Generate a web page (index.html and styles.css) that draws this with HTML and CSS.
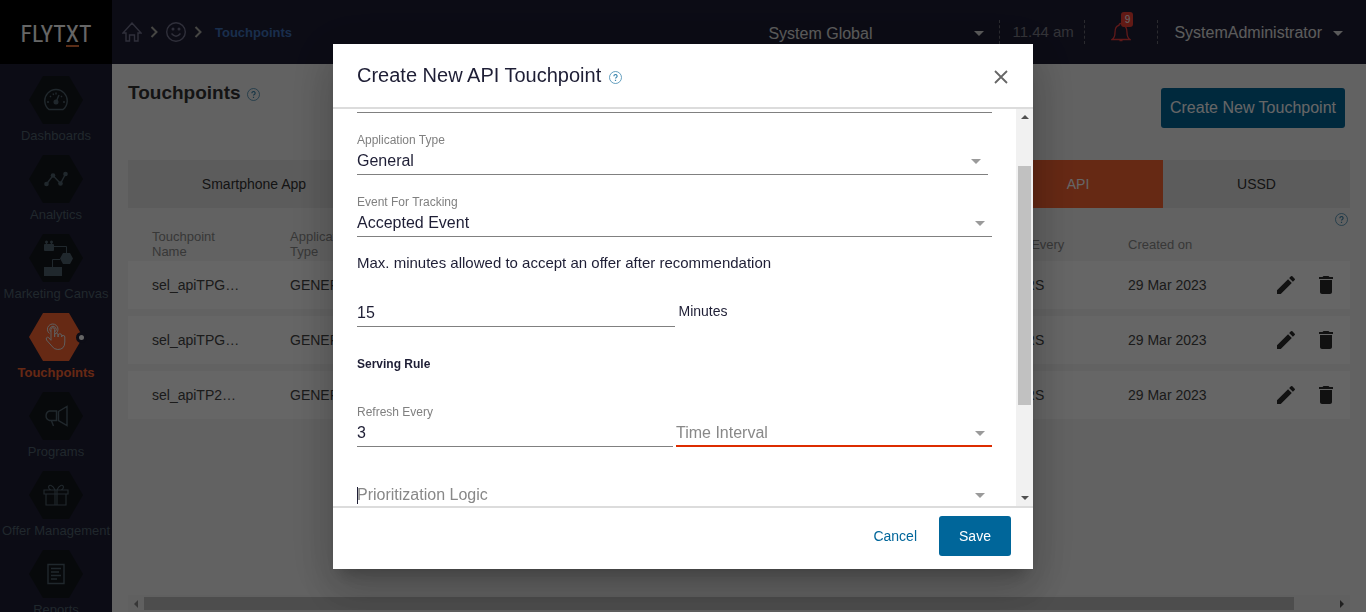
FILE: index.html
```html
<!DOCTYPE html>
<html lang="en">
<head>
<meta charset="utf-8">
<title>Touchpoints</title>
<link rel="stylesheet" href="styles.css">
</head>
<body>
<svg width="0" height="0" class="defs" aria-hidden="true">
  <symbol id="help" viewBox="0 0 13 13"><circle cx="6.500" cy="6.500" r="6" fill="none" stroke="currentColor" stroke-width=".8"/><path d="M4.900 5.200a1.600 1.600 0 1 1 2.400 1.300q-.8.500-.8 1.100M6.500 8.700v1.200" fill="none" stroke="currentColor" stroke-width="1.200"/></symbol>
  <symbol id="hexagon" viewBox="0 0 54 48"><path d="M14 0H40L54 24 40 48H14L0 24Z" fill="currentColor"/></symbol>
  <symbol id="pencil" viewBox="0 0 24 24"><path d="M3 17.250V21h3.750L17.810 9.940l-3.750-3.750L3 17.250zM20.710 7.040a1 1 0 0 0 0-1.410l-2.340-2.340a1 1 0 0 0-1.410 0l-1.830 1.830 3.750 3.750 1.830-1.830z" fill="currentColor"/></symbol>
  <symbol id="trash" viewBox="0 0 24 24"><path d="M6 19c0 1.100.9 2 2 2h8c1.100 0 2-.9 2-2V7H6v12zM19 4h-3.500l-1-1h-5l-1 1H5v2h14V4z" fill="currentColor"/></symbol>
</svg>

<div class="app">
  <aside class="sidebar">
    <a class="logo" href="#" aria-label="Flytxt">FLYT<span class="logo-x">X</span>T</a>
    <nav class="menu">
      <a class="menu-item" href="#">
        <span class="hex"><svg class="hex-bg"><use href="#hexagon"/></svg>
          <svg class="hex-icon" viewBox="0 0 24 24"><path d="M5 21.500A11.200 11.200 0 1 1 19 21.500Z"/><circle cx="12" cy="14" r="1.800" fill="currentColor"/><path d="M12 14l3-7M3 14h2M19 14h2M6 8l1 1M9 5.500l.7 1.500M18 8l-1 1M12 4.500v2"/></svg></span>
        Dashboards</a>
      <a class="menu-item" href="#">
        <span class="hex"><svg class="hex-bg"><use href="#hexagon"/></svg>
          <svg class="hex-icon" viewBox="0 0 24 24"><path d="M2.500 17L9 8.500 16.500 16.500 21.500 7"/><g fill="currentColor" stroke="none"><circle cx="2.500" cy="17" r="2.300"/><circle cx="9" cy="8.500" r="2.300"/><circle cx="16.500" cy="16.500" r="2.300"/><circle cx="21.500" cy="7" r="2.300"/></g></svg></span>
        Analytics</a>
      <a class="menu-item" href="#">
        <span class="hex"><svg class="hex-bg"><use href="#hexagon"/></svg>
          <svg class="hex-icon hex-icon-large" viewBox="-5 0 36 36"><path d="M11 6.500H23.500V14M9.500 27V19.500H17" stroke-width="1"/><g fill="currentColor" stroke="none"><rect x="1" y="4" width="10" height="7" rx="1"/><circle cx="3.500" cy="2" r="1.500"/><circle cx="8.500" cy="2" r="1.500"/><path d="M3 2h1v3H3zM8 2h1v3H8zM20 13h7l3 5.500-3 5.500h-7l-3-5.500zM1 27h18v9H1z"/></g></svg></span>
        Marketing Canvas</a>
      <a class="menu-item menu-item-active" href="#" aria-current="page">
        <span class="hex"><svg class="hex-bg"><use href="#hexagon"/></svg>
          <svg class="hex-icon hex-icon-touch" viewBox="0 0 22 28"><path d="M6 17V6.500a1.800 1.800 0 0 1 3.600 0V14v-2a1.700 1.700 0 0 1 3.500 0v2-1.500a1.700 1.700 0 0 1 3.500 0V14a1.600 1.600 0 0 1 3.200 0v5q0 7.500-7 7.500-4 0-6-3.500L1.500 17q-1-2.500 1-2.800 1.500 0 3.500 3.300M4.500 10.500a5.300 5.300 0 1 1 7-.5M5.500 8.500a3.200 3.200 0 1 1 5 0"/></svg>
          <span class="hex-dot"></span></span>
        Touchpoints</a>
      <a class="menu-item" href="#">
        <span class="hex"><svg class="hex-bg"><use href="#hexagon"/></svg>
          <svg class="hex-icon hex-icon-wide" viewBox="0 0 26 22"><path d="M13.500 6H6.500a5 5 0 0 0 0 9.500h7zM15.500 6.500l8.500-5v19l-8.500-5zM8.500 16l2 5"/></svg></span>
        Programs</a>
      <a class="menu-item" href="#">
        <span class="hex"><svg class="hex-bg"><use href="#hexagon"/></svg>
          <svg class="hex-icon hex-icon-wide" viewBox="0 0 26 22"><path d="M1 6h24v4H1zM3 10h20v11H3zM12 6v15M14 6v15M12 6C10 1 6 0 5.500 3q0 2 2.500 3M14 6c2-5 6-6 6.500-3q0 2-2.500 3" stroke-width="1.100"/></svg></span>
        Offer Management</a>
      <a class="menu-item" href="#">
        <span class="hex"><svg class="hex-bg"><use href="#hexagon"/></svg>
          <svg class="hex-icon" viewBox="0 0 24 24"><path d="M4 2.500h16v19H4zM7 6.500h10M7 10h8M7 13.500h10M7 17h6"/></svg></span>
        Reports</a>
    </nav>
  </aside>

  <div class="page">
    <header class="topbar">
      <nav class="crumbs" aria-label="Breadcrumb">
        <a href="#" aria-label="Home"><svg width="20" height="20" viewBox="0 0 20 20"><path d="M1 11L10 1l9 10h-3v8h-3.500v-6h-5v6H4v-8z"/></svg></a>
        <svg class="crumb-arrow" width="8" height="12" viewBox="0 0 8 12"><path d="M1.500 1l5 5-5 5"/></svg>
        <a href="#" aria-label="Workspace"><svg width="20" height="20" viewBox="0 0 20 20"><circle cx="10" cy="10" r="9.300"/><path d="M5.500 11.500q4.500 5.500 9 0"/><circle cx="7" cy="7" r=".8"/><circle cx="13" cy="7" r=".8"/></svg></a>
        <svg class="crumb-arrow" width="8" height="12" viewBox="0 0 8 12"><path d="M1.500 1l5 5-5 5"/></svg>
        <a class="crumb-current" href="#">Touchpoints</a>
      </nav>
      <div class="scope"><select aria-label="Scope"><option>System Global</option></select></div>
      <span class="clock">11.44 am</span>
      <button class="alerts" type="button" aria-label="Notifications">
        <svg width="20" height="20" viewBox="0 0 20 20"><path d="M1 17.500q3-2 3-7Q4 4 8 3.300 8 1.500 10 1.500t2 1.800q4 .7 4 7.200 0 5 3 7zM8.500 18.500h3"/></svg>
        <span class="badge">9</span>
      </button>
      <button class="user" type="button">SystemAdministrator</button>
    </header>

    <main class="content">
      <div class="heading">
        <h1>Touchpoints</h1>
        <svg class="help"><use href="#help"/></svg>
        <button class="btn btn-create" type="button">Create New Touchpoint</button>
      </div>
      <div class="tabs">
        <button class="tab tab-app" type="button">Smartphone App</button>
        <span class="tab-rest"></span>
        <button class="tab tab-api" type="button">API</button>
        <button class="tab tab-ussd" type="button">USSD</button>
      </div>
      <div class="table-help"><svg class="help"><use href="#help"/></svg></div>
      <table class="list">
        <colgroup><col class="col-name"><col class="col-type"><col><col class="col-refresh"><col class="col-created"><col class="col-actions"></colgroup>
        <thead><tr><th>Touchpoint Name</th><th>Application Type</th><th></th><th>Refresh Every</th><th>Created on</th><th></th></tr></thead>
        <tbody>
          <tr><td>sel_apiTPG…</td><td>GENERAL</td><td></td><td>3 HOURS</td><td>29 Mar 2023</td><td><div class="actions"><button type="button" aria-label="Edit"><svg><use href="#pencil"/></svg></button><button type="button" aria-label="Delete"><svg><use href="#trash"/></svg></button></div></td></tr>
          <tr><td>sel_apiTPG…</td><td>GENERAL</td><td></td><td>3 HOURS</td><td>29 Mar 2023</td><td><div class="actions"><button type="button" aria-label="Edit"><svg><use href="#pencil"/></svg></button><button type="button" aria-label="Delete"><svg><use href="#trash"/></svg></button></div></td></tr>
          <tr><td>sel_apiTP2…</td><td>GENERAL</td><td></td><td>3 HOURS</td><td>29 Mar 2023</td><td><div class="actions"><button type="button" aria-label="Edit"><svg><use href="#pencil"/></svg></button><button type="button" aria-label="Delete"><svg><use href="#trash"/></svg></button></div></td></tr>
        </tbody>
      </table>
      <div class="hscroll"><i class="tri tri-left"></i><i class="hthumb"></i><i class="tri tri-right"></i></div>
    </main>
  </div>
</div>

<div class="backdrop">
  <section class="dialog" role="dialog" aria-modal="true" aria-labelledby="dialog-title">
    <header class="dialog-head">
      <h2 id="dialog-title">Create New API Touchpoint</h2>
      <svg class="help"><use href="#help"/></svg>
      <button class="close" type="button" aria-label="Close"><svg width="14" height="14" viewBox="0 0 14 14"><path d="M1 1l12 12M13 1L1 13"/></svg></button>
    </header>
    <div class="dialog-body">
      <form class="form">
        <div class="field-end"></div>
        <div class="field field-short">
          <label for="app-type">Application Type</label>
          <div class="pick"><select id="app-type"><option>General</option></select></div>
        </div>
        <div class="field">
          <label for="event">Event For Tracking</label>
          <div class="pick"><select id="event"><option>Accepted Event</option></select></div>
        </div>
        <label class="note" for="minutes">Max. minutes allowed to accept an offer after recommendation</label>
        <div class="minutes"><input id="minutes" type="text" value="15"><span>Minutes</span></div>
        <h3>Serving Rule</h3>
        <div class="pair">
          <div class="field">
            <label for="refresh">Refresh Every</label>
            <input id="refresh" type="text" value="3">
          </div>
          <div class="field field-unlabelled">
            <div class="pick pick-error"><select aria-label="Time Interval"><option>Time Interval</option></select></div>
          </div>
        </div>
        <div class="field field-unlabelled">
          <div class="pick pick-empty"><select aria-label="Prioritization Logic"><option>Prioritization Logic</option></select></div>
        </div>
      </form>
      <div class="vscroll"><i class="tri tri-up"></i><i class="vthumb"></i><i class="tri tri-down"></i></div>
    </div>
    <footer class="dialog-foot">
      <button class="btn-text" type="button">Cancel</button>
      <button class="btn btn-save" type="button">Save</button>
    </footer>
  </section>
</div>
</body>
</html>
```
FILE: styles.css
```css
* { box-sizing: border-box; }

body {
  margin: 0;
  height: 100vh;
  overflow: hidden;
  font-family: "Liberation Sans", Arial, sans-serif;
  font-size: 14px;
  color: #1e1e35;
}

button, input, select { font: inherit; color: inherit; border: 0; padding: 0; margin: 0; background: none; border-radius: 0; outline: 0; }
select { appearance: none; width: 100%; }
a { color: inherit; text-decoration: none; }
h1, h2, h3 { margin: 0; }
svg { display: block; flex: none; }
.defs { position: absolute; }

.app { display: flex; height: 100vh; }

/* Sidebar */
.sidebar { width: 112px; flex: none; background: #1e1e35; overflow: hidden; }
.logo {
  display: flex;
  align-items: center;
  justify-content: center;
  height: 64px;
  padding-top: 3px;
  background: #000;
  color: #fff;
  font-family: "Liberation Sans Narrow", "Roboto Condensed", Roboto, sans-serif;
  font-size: 24px;
  line-height: 22px;
}
.logo-x { margin-top: 2px; border-bottom: 2px solid #e2703a; }
.menu { display: flex; flex-direction: column; gap: 15px; padding-top: 12px; }
.menu-item {
  display: flex;
  flex-direction: column;
  align-items: center;
  gap: 4px;
  height: 64px;
  font-size: 13px;
  line-height: 16px;
  white-space: nowrap;
  color: #526470;
}
.hex { position: relative; display: grid; place-items: center; width: 54px; height: 48px; flex: none; }
.hex > * { grid-area: 1 / 1; }
.hex-bg { width: 54px; height: 48px; color: #13171c; }
.hex-icon { width: 24px; height: 24px; fill: none; stroke: currentColor; stroke-width: 1.4; }
.hex-icon-large { width: 36px; height: 36px; }
.hex-icon-wide { width: 26px; height: 22px; }
.hex-icon-touch { width: 22px; height: 28px; color: #eee; stroke-width: 1; }
.menu-item-active { color: #ff6633; font-weight: bold; }
.menu-item-active .hex-bg { color: #ff6633; }
.hex-dot {
  position: absolute;
  right: -4px;
  top: 19px;
  width: 11px;
  height: 11px;
  border: 3px solid #1e1e35;
  border-radius: 50%;
  background: #fff;
}

/* Top bar */
.page { flex: 1; min-width: 0; display: flex; flex-direction: column; background: #f5f5f5; }
.topbar { display: flex; align-items: center; height: 64px; flex: none; padding: 0 18px 0 10px; background: #1e1e35; font-size: 16px; color: #fff; }
.crumbs { display: flex; align-items: center; flex: 1; gap: 8px; }
.crumbs svg { fill: none; stroke: #777791; stroke-width: 1.4; }
.crumbs .crumb-arrow { stroke: #b0b0a8; stroke-width: 2; }
.crumb-current { margin-left: 5px; font-size: 13px; font-weight: bold; color: #4073be; }
.scope { position: relative; width: 221px; margin-right: 10px; }
.scope::after, .pick::after {
  content: "";
  position: absolute;
  right: 7px;
  top: 12px;
  border: 5px solid transparent;
  border-top-color: #9a9a9a;
  border-bottom: 0;
  pointer-events: none;
}
.scope::after { right: 5px; top: 10px; border-top-color: #e0e0e0; }
.scope select { height: 22px; padding-top: 2px; color: #e6e6e6; display: block; }
.clock { width: 86px; padding-left: 12px; font-size: 15px; line-height: 24px; border: 1px dashed #6b6b76; border-width: 0 1px; color: #80808c; }
.alerts { position: relative; width: 73px; height: 24px; padding-left: 26px; border-right: 1px dashed #6b6b76; }
.alerts svg { fill: none; stroke: #f04040; stroke-width: 1.3; }
.badge { position: absolute; left: 36px; top: -8px; width: 12px; height: 15px; border-radius: 3px; background: #f44336; color: #fff; font-size: 10px; line-height: 15px; text-align: center; }
.user { display: flex; align-items: center; gap: 11px; padding: 2px 0 0 16px; color: #e6e6e6; }
.user::after { content: ""; margin-right: 5px; border: 5px solid transparent; border-top-color: #e0e0e0; border-bottom: 0; }

/* Page content */
.content { flex: 1; display: flex; flex-direction: column; padding: 24px 16px 0; }
.help { width: 13px; height: 13px; color: #4089b0; }
.heading { display: flex; height: 72px; }
.heading h1 { font-size: 19px; line-height: 20px; height: 12px; margin: -5px 6px 0 0; color: #333; }
.heading .btn { margin-left: auto; margin-right: 5px; }
.btn { height: 40px; border-radius: 3px; background: #00669a; color: #fff; }
.btn-create { width: 184px; font-size: 16px; }
.tabs { display: flex; height: 48px; flex: none; background: #e7e7e7; }
.tab { flex: 252 0 0; color: #333; }
.tab-rest { flex: 613 0 0; }
.tab-api { flex-grow: 170; background: #ff6633; color: #fff; }
.tab-ussd { flex-grow: 187; }
.table-help { display: flex; justify-content: flex-end; padding: 5px 2px 3px; }
.list { width: 100%; table-layout: fixed; border-collapse: separate; border-spacing: 0; }
.col-name, .col-type { width: 138px; }
.col-refresh { width: 146px; }
.col-created { width: 144px; }
.col-actions { width: 102px; }
.list th { height: 32px; padding: 0 24px 2px; font-size: 13px; line-height: 15px; font-weight: normal; text-align: left; color: #8c8c8c; }
.list td { height: 55px; padding: 0 0 0 24px; border-bottom: 7px solid transparent; background: #fff; background-clip: padding-box; color: #444; }
.list td:last-child { padding: 0 12px 0 2px; }
.actions { display: flex; justify-content: flex-end; gap: 16px; }
.actions svg { width: 24px; height: 24px; color: #2b2b2b; }
.hscroll { display: flex; align-items: center; height: 17px; margin-top: auto; padding: 0 6px; background: #f1f1f1; }
.hthumb { flex: none; width: 95%; height: 13px; margin-left: 6px; margin-right: auto; background: #c1c1c1; }
.tri { flex: none; width: 0; height: 0; border: 4px solid transparent; }
.tri-left { border-left: 0; border-right-color: #8a8a8a; }
.tri-right { border-right: 0; border-left-color: #505050; }
.tri-up { border-top: 0; border-bottom-color: #505050; }
.tri-down { border-bottom: 0; border-top-color: #505050; }

/* Dialog */
.backdrop { position: fixed; inset: 0; display: flex; justify-content: center; padding: 44px 16px 43px; background: rgba(0, 0, 0, .6); }
.dialog {
  display: flex;
  flex-direction: column;
  width: 700px;
  background: #fff;
  box-shadow: 0 11px 15px -7px rgba(0, 0, 0, .2), 0 24px 38px 3px rgba(0, 0, 0, .14), 0 9px 46px 8px rgba(0, 0, 0, .12);
}
.dialog-head { display: flex; align-items: center; gap: 8px; height: 65px; flex: none; padding: 0 25px 0 24px; border-bottom: 2px solid #dcdcdc; }
.dialog-head h2 { padding-bottom: 2px; font-size: 20px; line-height: 24px; font-weight: normal; }
.dialog-head .help { margin-top: 4px; }
.close { margin-left: auto; padding-top: 2px; }
.close path { stroke: #666; stroke-width: 1.8; }
.dialog-body { flex: 1; min-height: 0; display: flex; overflow: hidden; }
.form { flex: 1; padding: 0 24px; }
.field-end { height: 4px; border-bottom: 1px solid #808080; }
.field { padding-top: 20px; }
.field-short { margin-right: 4px; }
.field label { display: block; font-size: 12px; line-height: 14px; color: #808080; }
.field-unlabelled { padding-top: 34px; }
.form select, .form input { display: block; width: 100%; height: 28px; border-bottom: 1px solid #808080; font-size: 16px; }
.pick { position: relative; }
.pick-error select { border-bottom: 2px solid #dd2c00; }
.pick-error select, .pick-empty select { color: #888; }
.pick-empty::before { content: ""; position: absolute; left: 0; top: 6px; width: 1px; height: 17px; background: #1e1e35; }
.note { display: block; padding-top: 18px; font-size: 15px; line-height: 16px; }
.minutes { display: grid; grid-template-columns: 1fr 1fr; align-items: center; padding-top: 28px; }
.minutes span { padding: 0 0 4px 4px; }
.form h3 { padding: 30px 0 14px; font-size: 12px; line-height: 14px; }
.pair { display: grid; grid-template-columns: 1fr 1fr; gap: 3px; }
.vscroll { display: flex; flex-direction: column; align-items: center; width: 17px; flex: none; padding: 6px 0; background: #f1f1f1; }
.vthumb { width: 13px; height: 62%; margin: 47px 0 auto; background: #c1c1c1; }
.dialog-foot { display: flex; justify-content: flex-end; align-items: flex-start; gap: 22px; height: 63px; flex: none; padding: 8px 22px 0; border-top: 2px solid #dcdcdc; }
.btn-text { height: 40px; color: #00669a; }
.btn-save { width: 72px; }
```
